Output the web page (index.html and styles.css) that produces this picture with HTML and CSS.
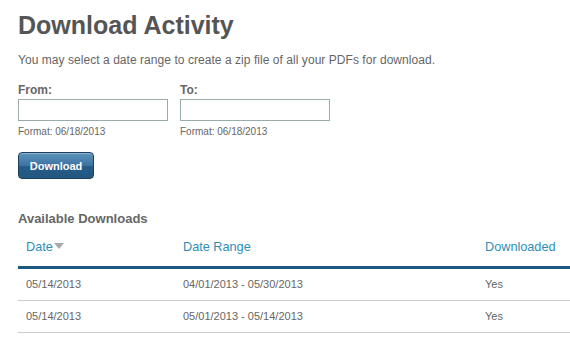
FILE: index.html
```html
<!DOCTYPE html>
<html lang="en">
<head>
    <meta charset="UTF-8">
    <title>Download Activity</title>
    <link rel="stylesheet" href="styles.css">
</head>
<body>
    <h1>Download Activity</h1>
    <p class="intro">You may select a date range to create a zip file of all your PDFs for download.</p>

    <div class="range">
        <label class="field">
            <span class="field-label">From:</span>
            <input type="text" id="from">
            <span class="hint">Format: 06/18/2013</span>
        </label>
        <label class="field">
            <span class="field-label">To:</span>
            <input type="text" id="to">
            <span class="hint">Format: 06/18/2013</span>
        </label>
    </div>
    <button class="btn">Download</button>

    <h3>Available Downloads</h3>
    <table class="downloads">
        <thead>
            <tr>
                <th class="col-date">Date<span class="sort"></span></th>
                <th class="col-range">Date Range</th>
                <th class="col-done">Downloaded</th>
            </tr>
        </thead>
        <tbody>
            <tr>
                <td>05/14/2013</td>
                <td>04/01/2013 - 05/30/2013</td>
                <td>Yes</td>
            </tr>
            <tr>
                <td>05/14/2013</td>
                <td>05/01/2013 - 05/14/2013</td>
                <td>Yes</td>
            </tr>
        </tbody>
    </table>
</body>
</html>
```

FILE: styles.css
```css
body { font-family: "Liberation Sans", Arial, sans-serif; margin: 0; padding: 10px 0 0 18px; color: #666; }
h1 { font-size: 25px; color: #555; margin: 0; line-height: 30px; }
.intro { font-size: 12px; margin: 12px 0 0; line-height: 16px; letter-spacing: 0.05px; }
.range { display: flex; gap: 12px; margin-top: 15px; }
.field { display: flex; flex-direction: column; }
.field-label { font-size: 12px; font-weight: bold; line-height: 14px; margin-bottom: 2px; }
.field input { width: 150px; height: 22px; box-sizing: border-box; border: 1px solid #9aabab; margin: 0; padding: 2px 4px; }
.hint { font-size: 10px; line-height: 12px; margin-top: 5px; }
.btn { margin-top: 14px; width: 76px; height: 27px; border: 1px solid #1d3f5c; border-radius: 4px; color: #fff; font-family: inherit; font-size: 11px; font-weight: bold; background: linear-gradient(#5d93bd, #3d73a0 50%, #285d8a 51%, #22577f); box-shadow: inset 0 1px 0 rgba(255,255,255,0.3); }
h3 { font-size: 13px; margin: 32px 0 0; line-height: 16px; color: #666; }
.downloads { width: 100%; border-collapse: collapse; margin-top: 6px; font-size: 11px; }
.downloads th { font-size: 12.7px; font-weight: normal; color: #2d8fb8; text-align: left; padding: 7px 8px 12px; line-height: 14px; border-bottom: 3px solid #1b5a7e; }
.downloads td { padding: 9px 8px 10px; border-bottom: 1px solid #ccc; line-height: 12px; }
.col-date { width: 141px; }
.col-range { width: 286px; }
.sort { display: inline-block; width: 0; height: 0; border-left: 5px solid transparent; border-right: 5px solid transparent; border-top: 6px solid #aaa; margin-left: 1px; vertical-align: 2px; }
```
